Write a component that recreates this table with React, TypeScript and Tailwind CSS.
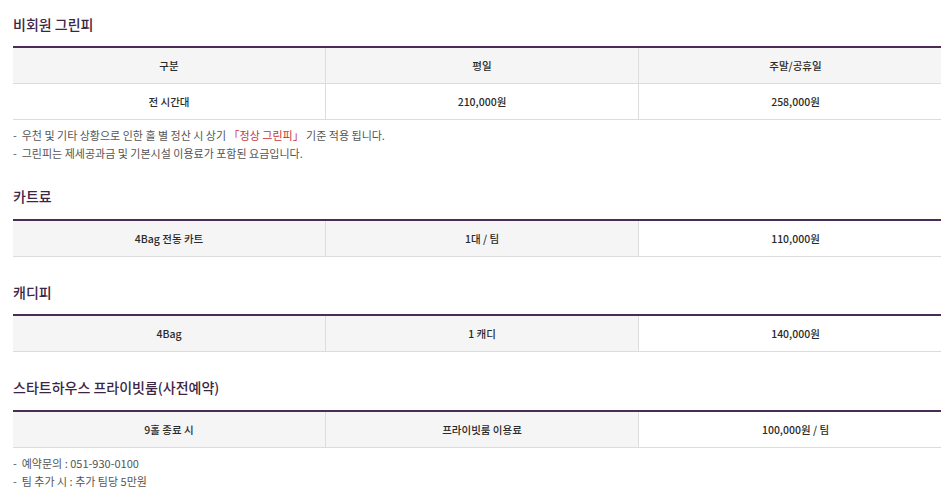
import React from "react";

type Cell = { text: string; gray?: boolean };

const font = { fontFamily: '"Noto Sans CJK KR", "Noto Sans", sans-serif' };

const SectionTitle = ({ children }: { children: React.ReactNode }) => (
  <h2 className="text-[14px] font-medium text-[#3d2645] leading-none">{children}</h2>
);

const Row = ({ cells, gray }: { cells: Cell[]; gray?: boolean }) => (
  <div className="grid grid-cols-3 border-b border-[#dcdcdc]">
    {cells.map((c, i) => (
      <div
        key={i}
        className={`h-[35px] flex items-center justify-center text-[10.5px] font-medium text-[#2a2a2a] ${
          i < cells.length - 1 ? "border-r border-[#dcdcdc]" : ""
        } ${gray || c.gray ? "bg-[#f5f5f5]" : "bg-white"}`}
      >
        {c.text}
      </div>
    ))}
  </div>
);

const Table = ({ children }: { children: React.ReactNode }) => (
  <div className="w-[939px] border-t-2 border-[#4b2c58]">{children}</div>
);

const Note = ({ children }: { children: React.ReactNode }) => (
  <p className="text-[11px] text-[#555] leading-[18px]">-&nbsp; {children}</p>
);

export default function App() {
  return (
    <div className="w-[941px] h-[490px] overflow-hidden bg-white pl-[13px]" style={font}>
      {/* 비회원 그린피 */}
      <div className="pt-[17px]">
        <SectionTitle>비회원 그린피</SectionTitle>
      </div>
      <div className="mt-[15px]">
        <Table>
          <Row gray cells={[{ text: "구분" }, { text: "평일" }, { text: "주말/공휴일" }]} />
          <Row cells={[{ text: "전 시간대" }, { text: "210,000원" }, { text: "258,000원" }]} />
        </Table>
      </div>
      <div className="mt-[6px]">
        <Note>
          우천 및 기타 상황으로 인한 홀 별 정산 시 상기{" "}
          <span className="text-[#c8333a]">「정상 그린피」</span> 기준 적용 됩니다.
        </Note>
        <Note>그린피는 제세공과금 및 기본시설 이용료가 포함된 요금입니다.</Note>
      </div>

      {/* 카트료 */}
      <div className="mt-[27px]">
        <SectionTitle>카트료</SectionTitle>
      </div>
      <div className="mt-[16px]">
        <Table>
          <Row
            cells={[
              { text: "4Bag 전동 카트", gray: true },
              { text: "1대 / 팀", gray: true },
              { text: "110,000원" },
            ]}
          />
        </Table>
      </div>

      {/* 캐디피 */}
      <div className="mt-[28px]">
        <SectionTitle>캐디피</SectionTitle>
      </div>
      <div className="mt-[15px]">
        <Table>
          <Row
            cells={[
              { text: "4Bag", gray: true },
              { text: "1 캐디", gray: true },
              { text: "140,000원" },
            ]}
          />
        </Table>
      </div>

      {/* 스타트하우스 */}
      <div className="mt-[28px]">
        <SectionTitle>스타트하우스 프라이빗룸(사전예약)</SectionTitle>
      </div>
      <div className="mt-[16px]">
        <Table>
          <Row
            cells={[
              { text: "9홀 종료 시", gray: true },
              { text: "프라이빗룸 이용료", gray: true },
              { text: "100,000원 / 팀" },
            ]}
          />
        </Table>
      </div>
      <div className="mt-[6px]">
        <Note>예약문의 : 051-930-0100</Note>
        <Note>팀 추가 시 : 추가 팀당 5만원</Note>
      </div>
    </div>
  );
}
